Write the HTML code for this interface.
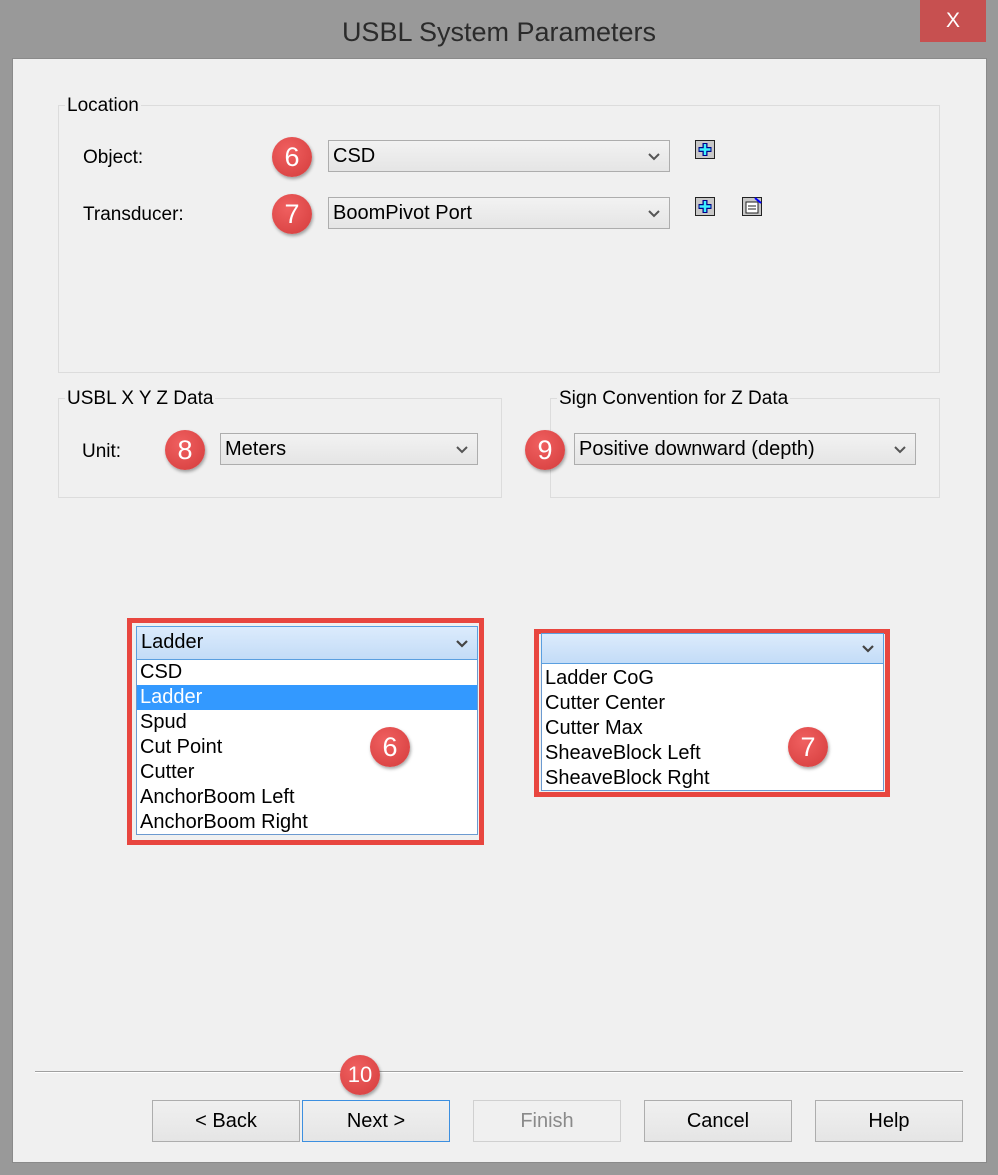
<!DOCTYPE html>
<html><head><style>
*{box-sizing:border-box;margin:0;padding:0}
body{width:998px;height:1175px;background:#999;font-family:"Liberation Sans",sans-serif;position:relative;overflow:hidden}
.a{position:absolute}
.client{left:12px;top:58px;width:975px;height:1105px;background:#f0f0f0;border:1px solid #8a8a8a}
.title{left:0;top:17px;width:998px;text-align:center;font-size:27px;color:#2b2b2b}
.close{left:920px;top:0;width:66px;height:42px;background:#c75050;color:#fff;font-size:21px;text-align:center;line-height:42px}
.gb{border:1px solid #dcdcdc}
.lab{font-size:19px;color:#000;background:#f0f0f0;padding:0 2px}
.txt{font-size:19px;color:#000}
.cb{border:1px solid #adadad;background:linear-gradient(#f2f2f2,#e5e5e5);font-size:20px;padding-left:4px;line-height:30px}
.ar{position:absolute;right:9px;top:12px}
.cir{width:40px;height:40px;border-radius:50%;background:radial-gradient(circle at 40% 35%,#f06060,#d43c3c);color:#fff;font-size:27px;text-align:center;line-height:40px;box-shadow:1px 2px 3px rgba(0,0,0,.35)}
.red{border:5px solid #e8463f;background:#f0f0f0}
.hdr{border:1px solid #5a9fe0;background:linear-gradient(#dcebfc,#c3dcf7);font-size:20px;padding-left:4px;line-height:31px}
.list{background:#fff;border:1px solid #6c9ad0;border-top:none;font-size:20px;padding-left:3px}
.list div{height:25px;line-height:25px}
.sel{background:#3399ff;color:#fff;margin-left:-3px;padding-left:3px}
.btn{top:1100px;width:148px;height:42px;border:1px solid #adadad;background:linear-gradient(#f0f0f0,#e5e5e5);text-align:center;line-height:40px;font-size:20px}
</style></head><body>
<div class="a title">USBL System Parameters</div>
<div class="a close">X</div>
<div class="a client"></div>

<div class="a gb" style="left:58px;top:105px;width:882px;height:268px"></div>
<div class="a lab" style="left:65px;top:95px">Location</div>
<div class="a txt" style="left:83px;top:147px">Object:</div>
<div class="a txt" style="left:83px;top:204px">Transducer:</div>
<div class="a cir" style="left:272px;top:137px">6</div>
<div class="a cir" style="left:272px;top:194px">7</div>
<div class="a cb" style="left:328px;top:140px;width:342px;height:32px">CSD<svg class="ar" width="12" height="8"><path d="M1 1l5 5 5-5" fill="none" stroke="#555" stroke-width="2"/></svg></div>
<div class="a cb" style="left:328px;top:197px;width:342px;height:32px">BoomPivot Port<svg class="ar" width="12" height="8"><path d="M1 1l5 5 5-5" fill="none" stroke="#555" stroke-width="2"/></svg></div>
<svg class="a" style="left:695px;top:140px" width="20" height="20"><rect x=".5" y=".5" width="19" height="18" fill="#c8c8c8" stroke="#222"/><path d="M10 3v13M3.5 9.5h13" stroke="#00008a" stroke-width="5"/><path d="M10 4v11M4.5 9.5h11" stroke="#3ef0ff" stroke-width="2.5"/></svg>
<svg class="a" style="left:695px;top:197px" width="20" height="20"><rect x=".5" y=".5" width="19" height="18" fill="#c8c8c8" stroke="#222"/><path d="M10 3v13M3.5 9.5h13" stroke="#00008a" stroke-width="5"/><path d="M10 4v11M4.5 9.5h11" stroke="#3ef0ff" stroke-width="2.5"/></svg>
<svg class="a" style="left:742px;top:196px" width="22" height="21"><rect x=".5" y="1.5" width="19" height="18" fill="#c8c8c8" stroke="#222"/><rect x="4" y="6" width="12" height="11" fill="#fff" stroke="#222"/><path d="M6 10h8M6 13h8" stroke="#222"/><path d="M13 2l6 5" stroke="#00f" stroke-width="2"/></svg>

<div class="a gb" style="left:58px;top:398px;width:444px;height:100px"></div>
<div class="a lab" style="left:65px;top:388px">USBL X Y Z Data</div>
<div class="a txt" style="left:82px;top:441px">Unit:</div>
<div class="a cir" style="left:165px;top:430px">8</div>
<div class="a cb" style="left:220px;top:433px;width:258px;height:32px">Meters<svg class="ar" width="12" height="8"><path d="M1 1l5 5 5-5" fill="none" stroke="#555" stroke-width="2"/></svg></div>

<div class="a gb" style="left:550px;top:398px;width:390px;height:100px"></div>
<div class="a lab" style="left:557px;top:388px">Sign Convention for Z Data</div>
<div class="a cir" style="left:525px;top:430px">9</div>
<div class="a cb" style="left:574px;top:433px;width:342px;height:32px">Positive downward (depth)<svg class="ar" width="12" height="8"><path d="M1 1l5 5 5-5" fill="none" stroke="#555" stroke-width="2"/></svg></div>

<div class="a red" style="left:127px;top:618px;width:357px;height:227px"></div>
<div class="a hdr" style="left:136px;top:626px;width:342px;height:34px">Ladder<svg class="ar" style="top:13px" width="12" height="8"><path d="M1 1l5 5 5-5" fill="none" stroke="#444" stroke-width="2.2"/></svg></div>
<div class="a list" style="left:136px;top:660px;width:342px;height:175px">
<div>CSD</div><div class="sel">Ladder</div><div>Spud</div><div>Cut Point</div><div>Cutter</div><div>AnchorBoom Left</div><div>AnchorBoom Right</div></div>
<div class="a cir" style="left:370px;top:727px">6</div>

<div class="a red" style="left:534px;top:629px;width:356px;height:168px"></div>
<div class="a hdr" style="left:541px;top:633px;width:343px;height:31px"><svg class="ar" style="top:11px" width="12" height="8"><path d="M1 1l5 5 5-5" fill="none" stroke="#444" stroke-width="2.2"/></svg></div>
<div class="a list" style="left:541px;top:664px;width:343px;height:127px;padding-top:2px">
<div>Ladder CoG</div><div>Cutter Center</div><div>Cutter Max</div><div>SheaveBlock Left</div><div>SheaveBlock Rght</div></div>
<div class="a cir" style="left:788px;top:727px">7</div>

<div class="a" style="left:35px;top:1071px;width:928px;height:1px;background:#a0a0a0"></div>
<div class="a" style="left:35px;top:1072px;width:928px;height:1px;background:#fff"></div>
<div class="a cir" style="left:340px;top:1055px;font-size:22px">10</div>

<div class="a btn" style="left:152px">&lt; Back</div>
<div class="a btn" style="left:302px;border-color:#3c8fe0">Next &gt;</div>
<div class="a btn" style="left:473px;color:#8a8a8a;border-color:#d0d0d0;background:#f0f0f0">Finish</div>
<div class="a btn" style="left:644px">Cancel</div>
<div class="a btn" style="left:815px">Help</div>
</body></html>
